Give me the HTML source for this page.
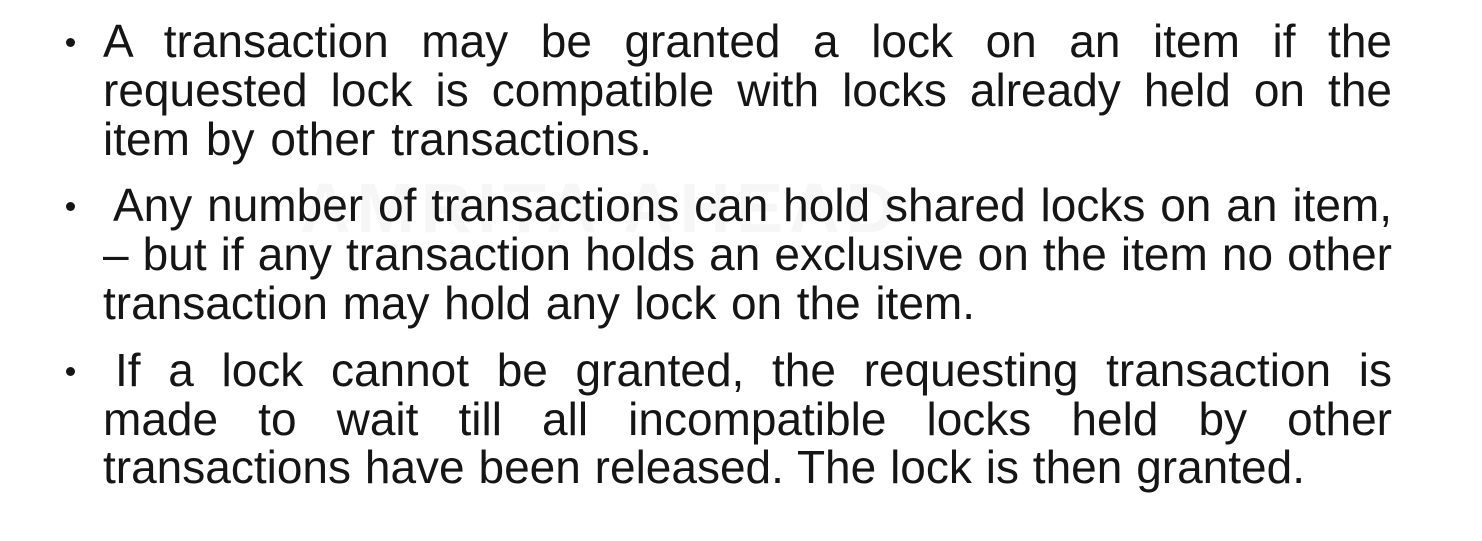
<!DOCTYPE html>
<html><head><meta charset="utf-8"><style>
html,body{margin:0;padding:0;background:#fff;width:1482px;height:541px;overflow:hidden;}
.l{position:absolute;height:49px;line-height:49px;font-family:"Liberation Sans",sans-serif;font-size:46px;color:#151515;text-align:justify;text-align-last:justify;white-space:normal;}
.b{position:absolute;width:9px;height:9px;border-radius:50%;background:#151515;}
.wm{position:absolute;left:300px;top:168px;font-family:"Liberation Sans",sans-serif;font-size:70px;font-weight:bold;color:#f6f6f6;letter-spacing:6px;}
</style></head><body>
<div class="wm">AMRITA AHEAD</div>
<div class="b" style="left:66px;top:38px"></div>
<div class="l" style="left:103px;width:1289px;top:17px">A transaction may be granted a lock on an item if the</div>
<div class="l" style="left:103px;width:1289px;top:66px">requested lock is compatible with locks already held on the</div>
<div class="l" style="left:103px;width:549px;top:115px">item by other transactions.</div>

<div class="b" style="left:66px;top:202px"></div>
<div class="l" style="left:113px;width:1279px;top:181px">Any number of transactions can hold shared locks on an item,</div>
<div class="l" style="left:103px;width:1289px;top:230px">– but if any transaction holds an exclusive on the item no other</div>
<div class="l" style="left:103px;width:872px;top:279px">transaction may hold any lock on the item.</div>

<div class="b" style="left:66px;top:367px"></div>
<div class="l" style="left:115px;width:1277px;top:346px">If a lock cannot be granted, the requesting transaction is</div>
<div class="l" style="left:103px;width:1289px;top:395px">made to wait till all incompatible locks held by other</div>
<div class="l" style="left:103px;width:1202px;top:443px">transactions have been released. The lock is then granted.</div>
</body></html>
